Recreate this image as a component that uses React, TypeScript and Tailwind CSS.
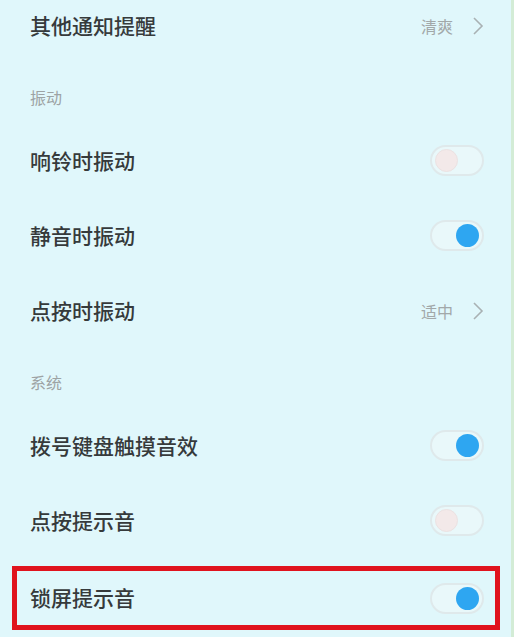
const font = { fontFamily: '"Noto Sans CJK SC", "Noto Sans", sans-serif' }

function Toggle({ on }: { on: boolean }) {
  return (
    <div className="relative h-[31px] w-[54px] rounded-full border-2 border-[#dfe9eb] bg-[#e9f8fa]">
      {on ? (
        <div className="absolute right-[3px] top-[2px] h-[23px] w-[23px] rounded-full bg-[#2ea6f1]" />
      ) : (
        <div className="absolute left-[3px] top-[2px] h-[23px] w-[23px] rounded-full border border-[#ebe2e2] bg-[#f3e9e9]" />
      )}
    </div>
  )
}

function Chevron() {
  return (
    <svg width="12" height="20" viewBox="0 0 12 20" fill="none">
      <path d="M2 2 L10 10 L2 18" stroke="#a9b1b3" strokeWidth="1.6" />
    </svg>
  )
}

function Row({ label, value, toggle }: { label: string; value?: string; toggle?: boolean }) {
  return (
    <div className="flex h-[75px] items-center justify-between pl-[30px] pr-[27px]">
      <span className="text-[21px] font-medium text-[#363a3b]">{label}</span>
      {value !== undefined ? (
        <div className="flex items-center gap-[19px]">
          <span className="text-[16px] text-[#a2a8a9]">{value}</span>
          <Chevron />
        </div>
      ) : (
        <Toggle on={!!toggle} />
      )}
    </div>
  )
}

export default function App() {
  return (
    <div className="h-[637px] w-[514px] overflow-hidden border-r-[3px] border-[#d3ecd6] bg-[#e0f7fb]" style={font}>
      <div className="flex h-[52px] items-center justify-between pl-[30px] pr-[27px]">
        <span className="text-[21px] font-medium text-[#363a3b]">其他通知提醒</span>
        <div className="flex items-center gap-[19px]">
          <span className="text-[16px] text-[#a2a8a9]">清爽</span>
          <Chevron />
        </div>
      </div>

      <div className="h-[71px] pl-[30px] pt-[33px] text-[16px] leading-[24px] text-[#9da3a4]">振动</div>
      <Row label="响铃时振动" toggle={false} />
      <Row label="静音时振动" toggle />
      <Row label="点按时振动" value="适中" />

      <div className="h-[60px] pl-[30px] pt-[22px] text-[16px] leading-[24px] text-[#9da3a4]">系统</div>
      <Row label="拨号键盘触摸音效" toggle />
      <Row label="点按提示音" toggle={false} />

      <div className="pl-[12px] pr-[11px] pt-[8px]">
        <div className="flex h-[64px] items-center justify-between border-[5px] border-[#e0131d] pl-[13px] pr-[11px]">
          <span className="text-[21px] font-medium text-[#363a3b]">锁屏提示音</span>
          <Toggle on />
        </div>
      </div>
    </div>
  )
}
